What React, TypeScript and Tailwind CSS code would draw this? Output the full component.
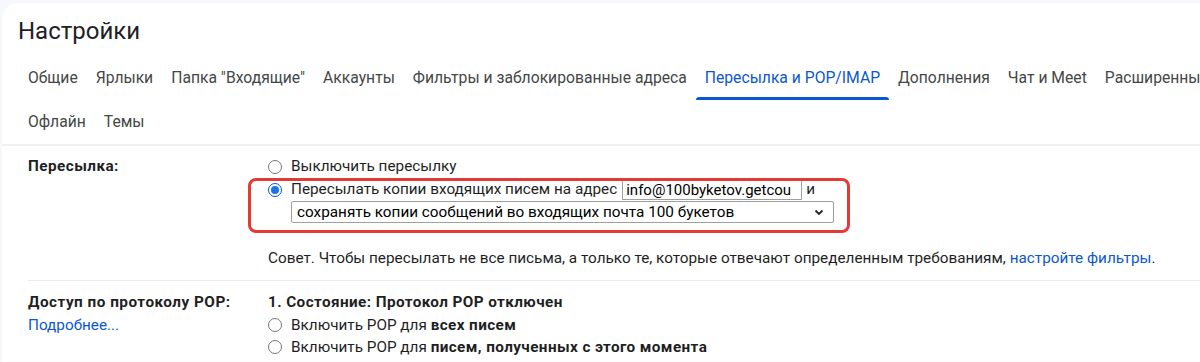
import React from 'react';

const tabsRow1 = [
  'Общие',
  'Ярлыки',
  'Папка "Входящие"',
  'Аккаунты',
  'Фильтры и заблокированные адреса',
  'Пересылка и POP/IMAP',
  'Дополнения',
  'Чат и Meet',
  'Расширенные',
];
const tabsRow2 = ['Офлайн', 'Темы'];
const active = 'Пересылка и POP/IMAP';

function Radio({ checked = false }: { checked?: boolean }) {
  return checked ? (
    <span className="w-[14px] h-[14px] rounded-full border border-[#0b57d0] bg-white flex items-center justify-center shrink-0">
      <span className="w-[8px] h-[8px] rounded-full bg-[#1a73e8]" />
    </span>
  ) : (
    <span className="w-[14px] h-[14px] rounded-full border border-[#767676] bg-white shrink-0" />
  );
}

function Tab({ name }: { name: string }) {
  const isActive = name === active;
  return (
    <div
      className={`relative h-[44px] px-[9px] flex items-center whitespace-nowrap text-[15.7px] ${
        isActive ? 'text-[#0b57d0]' : 'text-[#444746]'
      }`}
    >
      {name}
      {isActive && <span className="absolute left-0 right-0 bottom-0 h-[3px] rounded-t-[3px] bg-[#0b57d0]" />}
    </div>
  );
}

export default function App() {
  return (
    <div
      className="h-[362px] w-[1200px] overflow-hidden bg-[#f6f8fc] pt-[3px] pl-[2px]"
      style={{ fontFamily: 'Roboto, "Noto Sans", Arial, sans-serif' }}
    >
      <div className="h-full bg-white rounded-tl-2xl overflow-hidden">
        {/* Title */}
        <h1 className="pl-[16px] pt-[13px] h-[53px] text-[24px] leading-[30px] text-[#1f1f1f]">Настройки</h1>

        {/* Tabs */}
        <div className="pl-[17px]">
          <div className="flex flex-nowrap">
            {tabsRow1.map((t) => (
              <Tab key={t} name={t} />
            ))}
          </div>
          <div className="flex">
            {tabsRow2.map((t) => (
              <Tab key={t} name={t} />
            ))}
          </div>
        </div>
        <div className="h-[2px] bg-[#f1f1f1]" />

        {/* Forwarding */}
        <div className="pl-[26px] text-[15.3px] text-[#1f1f1f]">
          <div className="flex pt-[9px] pb-[10px] border-b border-[#e8eaed]">
            <div className="w-[240px] shrink-0 leading-[23px] font-bold tracking-[0.45px]">Пересылка:</div>
            <div className="flex-1 leading-[23px]">
              <div className="flex items-center gap-[9px] h-[23px]">
                <Radio />
                <span>Выключить пересылку</span>
              </div>
              <div className="relative">
                <div className="flex items-center gap-[9px] h-[23px] whitespace-nowrap">
                  <Radio checked />
                  <span>Пересылать копии входящих писем на адрес</span>
                  <span className="-ml-[4px] h-[20px] w-[180px] border border-[#a0a0a0] px-[3px] leading-[18px] text-[15px] overflow-hidden whitespace-nowrap text-black">
                    info@100byketov.getcou
                  </span>
                  <span className="-ml-[5px]">и</span>
                </div>
                <div className="pl-[23px]">
                  <div className="h-[22px] w-[543px] border border-[#a0a0a0] rounded-[2px] pl-[5px] pr-[8px] flex items-center justify-between text-black">
                    <span>сохранять копии сообщений во входящих почта 100 букетов</span>
                    <svg width="12" height="12" viewBox="0 0 12 12">
                      <path d="M2.5 4.5 6 8l3.5-3.5" fill="none" stroke="#222" strokeWidth="1.8" />
                    </svg>
                  </div>
                </div>
                {/* annotation */}
                <div className="absolute left-[-20px] top-[0px] w-[602px] h-[55px] border-[3px] border-[#e53935] rounded-[8px] pointer-events-none" />
              </div>
              <div className="mt-[24px] leading-[23px] whitespace-nowrap">
                Совет. Чтобы пересылать не все письма, а только те, которые отвечают определенным требованиям,{' '}
                <span className="text-[#0b57d0]">настройте фильтры</span>.
              </div>
            </div>
          </div>

          {/* POP */}
          <div className="flex pt-[10px]">
            <div className="w-[240px] shrink-0 leading-[23px]">
              <div className="font-bold tracking-[0.5px]">Доступ по протоколу POP:</div>
              <div className="text-[#0b57d0]">Подробнее...</div>
            </div>
            <div className="flex-1 leading-[23px]">
              <div className="font-bold tracking-[0.4px]">1. Состояние: Протокол POP отключен</div>
              <div className="flex items-center gap-[9px] h-[22px]">
                <Radio />
                <span>
                  Включить POP для <b className="tracking-[0.4px]">всех писем</b>
                </span>
              </div>
              <div className="flex items-center gap-[9px] h-[22px]">
                <Radio />
                <span>
                  Включить POP для <b className="tracking-[0.4px]">писем, полученных с этого момента</b>
                </span>
              </div>
            </div>
          </div>
        </div>
      </div>
    </div>
  );
}
